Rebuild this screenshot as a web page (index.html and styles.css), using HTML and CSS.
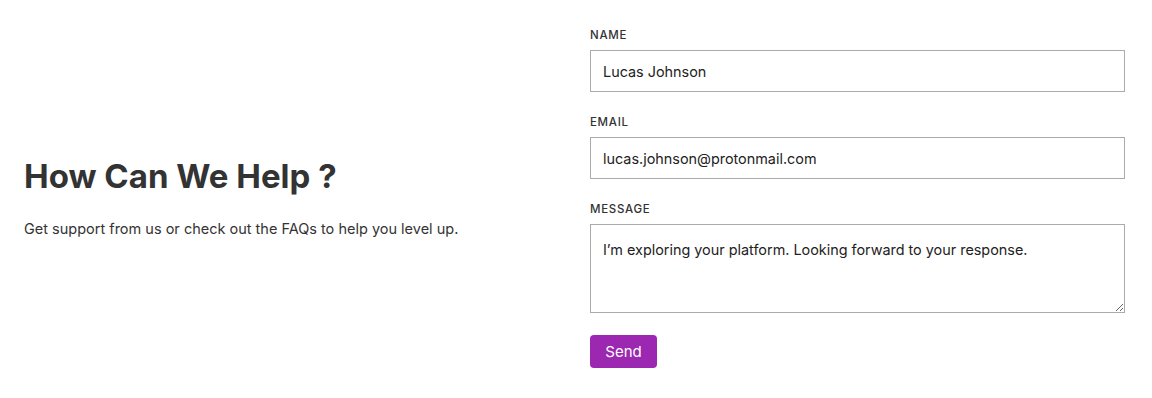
FILE: index.html
```html
<!DOCTYPE html>
<html lang="en">
<head>
    <meta charset="UTF-8">
    <meta name="viewport" content="width=device-width, initial-scale=1.0">
    <title>Contact Us</title>
    <link rel="stylesheet" href="styles.css">
</head>
<body>
    <section class="contact">
        <div class="contact-intro">
            <h1>How Can We Help ?</h1>
            <p>Get support from us or check out the FAQs to help you level up.</p>
        </div>

        <form class="contact-form">
            <div class="field">
                <label for="name">Name</label>
                <input type="text" id="name" value="Lucas Johnson">
            </div>
            <div class="field">
                <label for="email">Email</label>
                <input type="email" id="email" value="lucas.johnson@protonmail.com">
            </div>
            <div class="field">
                <label for="message">Message</label>
                <textarea id="message">I’m exploring your platform. Looking forward to your response.</textarea>
            </div>
            <button type="button" class="btn-send">Send</button>
        </form>
    </section>
</body>
</html>
```

FILE: styles.css
```css
/* Base */
:root {
    --text-color: #333333;
    --border-color: #ababab;
    --accent-color: #9c27b0;
}
body {
    font-family: 'Inter', 'Noto Sans', sans-serif;
    color: var(--text-color);
    background: #fff;
    margin: 0;
    padding: 0;
}

/* Layout */
.contact {
    display: grid;
    grid-template-columns: 535px 535px;
    column-gap: 31px;
    align-items: center;
    padding: 27px 27px 31px 24px;
}

/* Left column */
.contact-intro {
    padding-top: 2px;
}
.contact-intro h1 {
    font-size: 33px;
    font-weight: 700;
    margin: 0 0 22px;
    line-height: 1.2;
}
.contact-intro p {
    font-size: 14.5px;
    margin: 0;
    line-height: 1.5;
}

/* Form */
.field {
    margin-bottom: 22px;
}
.field label {
    display: block;
    font-size: 11.5px;
    font-weight: 500;
    text-transform: uppercase;
    letter-spacing: 0.06em;
    line-height: 17px;
    margin-bottom: 6px;
}
.field input,
.field textarea {
    display: block;
    width: 100%;
    box-sizing: border-box;
    font-family: inherit;
    font-size: 14.4px;
    color: #222;
    border: 1px solid var(--border-color);
    border-radius: 0;
    padding: 0 12px;
    outline: none;
}
.field input {
    height: 42px;
}
.field textarea {
    height: 89px;
    padding-top: 15px;
    line-height: 1.4;
}
.btn-send {
    background-color: var(--accent-color);
    color: #fff;
    border: none;
    border-radius: 4px;
    font-family: inherit;
    font-size: 15px;
    width: 67px;
    height: 33px;
    cursor: pointer;
}
```
